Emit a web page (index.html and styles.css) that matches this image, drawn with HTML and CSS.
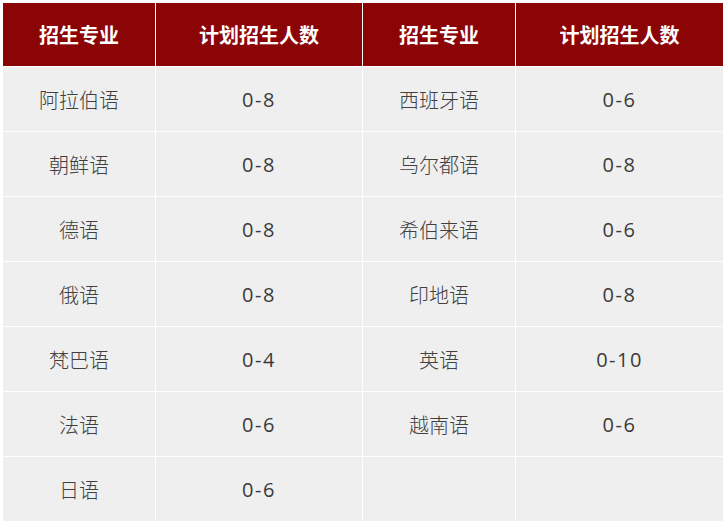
FILE: index.html
```html
<!DOCTYPE html>
<html lang="zh">
<head>
<meta charset="utf-8">
<link rel="stylesheet" href="styles.css">
</head>
<body>
<div class="table">
  <div class="th">招生专业</div><div class="th">计划招生人数</div><div class="th">招生专业</div><div class="th">计划招生人数</div>
  <div class="td">阿拉伯语</div><div class="td num">0-8</div><div class="td">西班牙语</div><div class="td num">0-6</div>
  <div class="td">朝鲜语</div><div class="td num">0-8</div><div class="td">乌尔都语</div><div class="td num">0-8</div>
  <div class="td">德语</div><div class="td num">0-8</div><div class="td">希伯来语</div><div class="td num">0-6</div>
  <div class="td">俄语</div><div class="td num">0-8</div><div class="td">印地语</div><div class="td num">0-8</div>
  <div class="td">梵巴语</div><div class="td num">0-4</div><div class="td">英语</div><div class="td num">0-10</div>
  <div class="td">法语</div><div class="td num">0-6</div><div class="td">越南语</div><div class="td num">0-6</div>
  <div class="td">日语</div><div class="td num">0-6</div><div class="td"></div><div class="td"></div>
</div>
</body>
</html>
```
FILE: styles.css
```css
html, body {
  margin: 0;
  padding: 0;
  background: #ffffff;
}
body {
  padding: 3px 0 0 3px;
  font-family: "Noto Sans CJK SC", "Noto Sans", sans-serif;
}
.table {
  display: grid;
  grid-template-columns: 152px 206px 152px 207px;
  grid-template-rows: 63px repeat(7, 64px);
  gap: 1px;
  background: #ffffff;
  width: 720px;
}
.th {
  background: #8b0507;
  color: #ffffff;
  font-weight: bold;
  font-size: 20px;
  display: flex;
  align-items: center;
  justify-content: center;
}
.td {
  background: #efefef;
  color: #404040;
  font-size: 20px;
  font-weight: 300;
  display: flex;
  align-items: center;
  justify-content: center;
}
.num {
  font-family: "Open Sans", "Noto Sans", sans-serif;
  font-weight: 400;
  color: #3a3a3a;
  letter-spacing: 1.5px;
}
```
